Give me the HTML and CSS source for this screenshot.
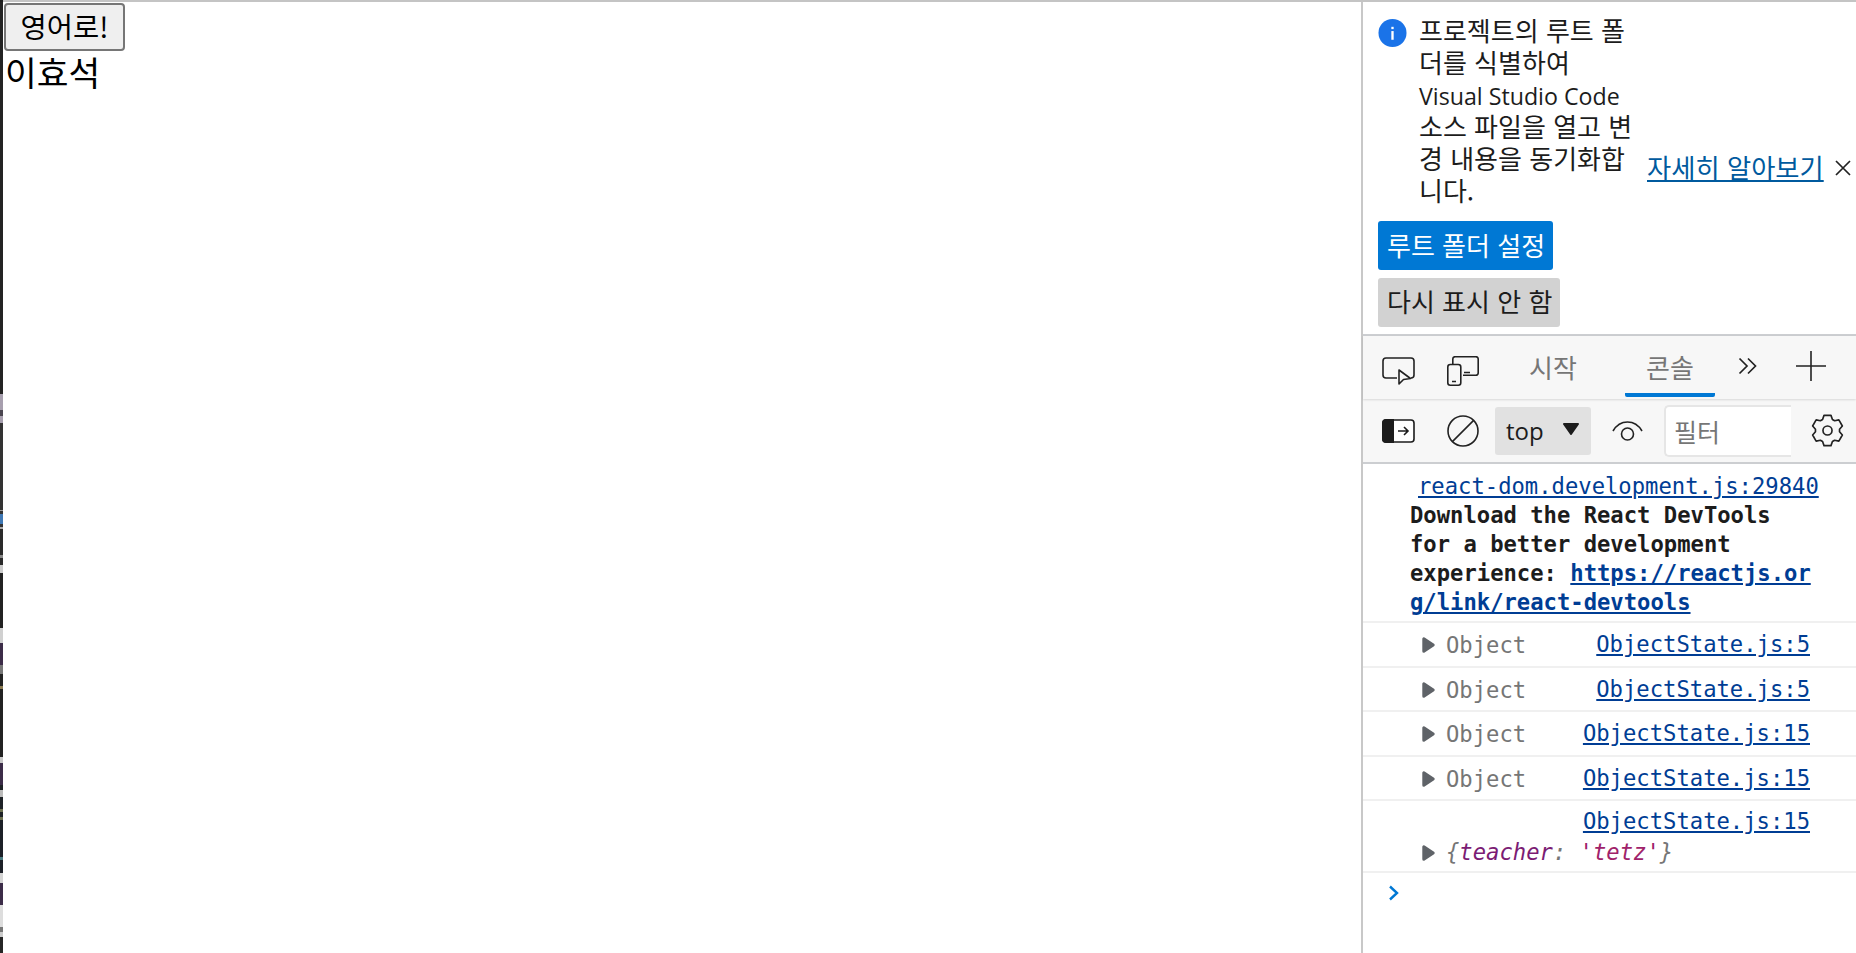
FILE: index.html
```html
<!DOCTYPE html>
<html lang="ko">
<head>
<meta charset="utf-8">
<title>이효석</title>
<link rel="stylesheet" href="styles.css">
</head>
<body>
<div class="topline"></div>
<div class="frame">
  <div class="strip"></div>
  <main class="page">
    <button class="eng">영어로!</button>
    <div class="name">이효석</div>
  </main>
  <aside class="devtools">
    <section class="infobar">
      <div class="infomsg">
        <svg class="infoicon" viewBox="0 0 30 30"><circle cx="15" cy="15" r="14.5" fill="#1a73e8"/><rect x="13.8" y="13" width="2.4" height="9" fill="#fff"/><rect x="13.8" y="8.6" width="2.4" height="2.4" fill="#fff"/></svg>
        <p class="infotext">프로젝트의 루트 폴<br>더를 식별하여<br><span class="latin">Visual Studio Code</span><br>소스 파일을 열고 변<br>경 내용을 동기화합<br>니다.</p>
        <a class="learn">자세히 알아보기</a>
        <svg class="infoclose" viewBox="0 0 16 16"><path d="M1 1L15 15M15 1L1 15" stroke="#222" stroke-width="1.7" fill="none"/></svg>
      </div>
      <div class="primary">루트 폴더 설정</div>
      <div class="secondary">다시 표시 안 함</div>
    </section>
    <nav class="tabs">
      <svg class="ico ico-a" viewBox="0 0 33 28"><path d="M15 21H4a3 3 0 0 1-3-3V4a3 3 0 0 1 3-3h25a3 3 0 0 1 3 3v14a3 3 0 0 1-3 3" fill="none" stroke="#222" stroke-width="1.6"/><path d="M17 13v14l4.500-4.500 7-1z" fill="#f7f7f7" stroke="#222" stroke-width="1.6" stroke-linejoin="round"/></svg>
      <svg class="ico ico-b" viewBox="0 0 32 30"><path d="M5.800 8V3a2.300 2.300 0 0 1 2.300-2.300h20.800a2.300 2.300 0 0 1 2.300 2.300v14a2.300 2.300 0 0 1-2.300 2.300H16" fill="none" stroke="#222" stroke-width="1.6"/><rect x="0.800" y="8.500" width="13" height="20.700" rx="2.500" fill="#f7f7f7" stroke="#222" stroke-width="1.6"/><path d="M5 25.500h4M17 16.500h6" stroke="#222" stroke-width="1.6"/></svg>
      <span class="tab tab-start">시작</span>
      <span class="tab tab-console">콘솔</span>
      <svg class="ico ico-more" viewBox="0 0 20 18"><path d="M1.500 1.500l7.500 7.500-7.500 7.500M10 1.500l7.500 7.500-7.500 7.500" fill="none" stroke="#222" stroke-width="1.700"/></svg>
      <svg class="ico ico-plus" viewBox="0 0 30 30"><path d="M15 0v30M0 15h30" stroke="#222" stroke-width="1.6"/></svg>
    </nav>
    <div class="toolbar">
      <svg class="ico ico-side" viewBox="0 0 33 24"><rect x="1" y="1" width="31" height="22" rx="3" fill="#fff" stroke="#1c1c1c" stroke-width="1.6"/><path d="M4 0h8v24H4a4 4 0 0 1-4-4V4a4 4 0 0 1 4-4z" fill="#1c1c1c"/><path d="M16 12h10M22 8l4 4-4 4" fill="none" stroke="#1c1c1c" stroke-width="1.6"/></svg>
      <svg class="ico ico-clear" viewBox="0 0 32 32"><circle cx="16" cy="16" r="15" fill="none" stroke="#222" stroke-width="1.6"/><path d="M5.400 26.600L26.600 5.400" stroke="#222" stroke-width="1.6"/></svg>
      <div class="context"><span>top</span><svg class="caret" viewBox="0 0 18 12"><path d="M2 1h14L9 11z" fill="#1c1c1c" stroke="#1c1c1c" stroke-width="2" stroke-linejoin="round"/></svg></div>
      <svg class="ico ico-eye" viewBox="0 0 31 20"><path d="M1 10C4.500 4 9.500 1 15.500 1s11 3 14.500 9" fill="none" stroke="#222" stroke-width="1.6"/><circle cx="15.500" cy="13" r="6" fill="none" stroke="#222" stroke-width="1.6"/></svg>
      <div class="filter">필터</div>
      <svg class="ico ico-gear" viewBox="0 0 24 24"><path d="M9.460 .99L14.540 .99 15.580 3.960 17.170 4.880 20.260 4.290 22.810 8.700 20.750 11.080 20.750 12.920 22.810 15.300 20.260 19.710 17.170 19.120 15.580 20.040 14.540 23.010 9.460 23.010 8.420 20.040 6.830 19.120 3.740 19.710 1.190 15.300 3.250 12.920 3.250 11.080 1.190 8.700 3.740 4.290 6.830 4.880 8.420 3.960z" fill="none" stroke="#222" stroke-width="1.200" stroke-linejoin="round"/><circle cx="12" cy="12" r="3.300" fill="none" stroke="#222" stroke-width="1.200"/></svg>
    </div>
    <div class="console">
      <div class="msg msg-react">
        <div class="src src-react"><a>react-dom.development.js:29840</a></div>
        <div class="react-text">Download the React DevTools for a better development experience: <a class="url">https://reactjs.org/link/react-devtools</a></div>
      </div>
      <div class="msg msg-obj">
        <svg class="tri" viewBox="0 0 13 16"><path d="M1.800 1.800v12.400l9.400-6.200z" fill="#5f6368" stroke="#5f6368" stroke-width="3" stroke-linejoin="round"/></svg>
        <span class="obj">Object</span><a class="src-link">ObjectState.js:5</a>
      </div>
      <div class="msg msg-obj">
        <svg class="tri" viewBox="0 0 13 16"><path d="M1.800 1.800v12.400l9.400-6.200z" fill="#5f6368" stroke="#5f6368" stroke-width="3" stroke-linejoin="round"/></svg>
        <span class="obj">Object</span><a class="src-link">ObjectState.js:5</a>
      </div>
      <div class="msg msg-obj">
        <svg class="tri" viewBox="0 0 13 16"><path d="M1.800 1.800v12.400l9.400-6.200z" fill="#5f6368" stroke="#5f6368" stroke-width="3" stroke-linejoin="round"/></svg>
        <span class="obj">Object</span><a class="src-link">ObjectState.js:15</a>
      </div>
      <div class="msg msg-obj">
        <svg class="tri" viewBox="0 0 13 16"><path d="M1.800 1.800v12.400l9.400-6.200z" fill="#5f6368" stroke="#5f6368" stroke-width="3" stroke-linejoin="round"/></svg>
        <span class="obj">Object</span><a class="src-link">ObjectState.js:15</a>
      </div>
      <div class="msg msg-last">
        <div class="src src-last"><a>ObjectState.js:15</a></div>
        <div class="last-line">
          <svg class="tri" viewBox="0 0 13 16"><path d="M1.800 1.800v12.400l9.400-6.200z" fill="#5f6368" stroke="#5f6368" stroke-width="3" stroke-linejoin="round"/></svg>
          <span class="literal">{<span class="key">teacher</span><span class="colon">:</span> <span class="val">'tetz'</span>}</span>
        </div>
      </div>
      <svg class="prompt" viewBox="0 0 12 16"><path d="M2 1.500L9 8l-7 6.500" fill="none" stroke="#0078d4" stroke-width="2.400"/></svg>
    </div>
  </aside>
</div>
</body>
</html>
```
FILE: styles.css
```css
* { box-sizing: border-box; }
html, body { margin: 0; height: 100%; background: #fff; overflow: hidden; }
body { display: flex; flex-direction: column; font-family: "Noto Sans CJK KR", "Noto Sans", sans-serif; }
.topline { height: 2px; background: #c4c4c4; flex: none; border-left: 3px solid #1f1f1f; }
.frame { flex: 1; display: flex; min-height: 0; }
.strip {
  width: 3px; flex: none;
  background: linear-gradient(to bottom,
    #232323 0 392px, #a79fae 392px 408px, #4a4650 408px 414px, #a79fae 414px 421px,
    #333 421px 508px, #9a9a9a 508px 509px, #333 509px 512px, #3f78b4 512px 522px,
    #333 522px 525px, #aaa 525px 527px, #2a2a2a 527px 553px, #888 553px 556px,
    #2a2a2a 556px 563px, #ccc 563px 571px, #222 571px 626px, #d0d0d0 626px 641px,
    #3c2c48 641px 663px, #777 663px 672px, #222 672px 684px, #8a7a50 684px 687px,
    #222 687px 755px, #c8c8c8 755px 761px, #3c2c48 761px 783px, #1e2226 783px 788px,
    #bbb 788px 795px, #1e2226 795px 807px, #6c7050 807px 810px, #1e2226 810px 815px,
    #6c7050 815px 818px, #1c2028 818px 855px, #4a7a80 855px 858px, #1c2028 858px 871px,
    #d4d4d4 871px 881px, #3c2c48 881px 903px, #ddd 903px 925px, #777 925px 930px, #ccc 930px 935px,
    #262626 935px);
}
.page { flex: 1; padding-left: 1px; padding-top: 1px; }
.eng { display: block; width: 121px; height: 48px; padding: 0 0 3px; background: #efefef; border: 2px solid #767676; border-radius: 4px; font: 28.500px "Noto Sans CJK KR", sans-serif; color: #000; }
.name { font-size: 34.500px; line-height: 45px; margin-top: -2px; margin-left: 1px; color: #000; }
.devtools { width: 495px; flex: none; border-left: 2px solid #c8c8c8; display: flex; flex-direction: column; font-family: "Noto Sans CJK KR", sans-serif; }
.infobar { height: 334px; flex: none; padding: 14px 0 0 15px; border-bottom: 2px solid #ccced1; }
.infomsg { display: flex; align-items: flex-end; height: 186px; }
.infoicon { width: 29px; height: 30px; align-self: flex-start; margin-top: 2px; flex: none; }
.infotext { width: 216px; margin: -2px 0 0 12px; font-size: 26px; line-height: 32px; color: #1c1c1c; align-self: flex-start; flex: none; }
.latin { font-family: "Open Sans", sans-serif; font-size: 23.200px; line-height: 1; }
.learn { margin: 0 0 17px 12px; font-size: 26.300px; line-height: 36px; color: #005a9e; text-decoration: underline; white-space: nowrap; flex: none; }
.infoclose { width: 16px; height: 16px; margin: 0 0 26px 11px; flex: none; }
.primary, .secondary { display: flex; align-items: center; height: 49px; padding: 0 9px; border-radius: 3px; font-size: 26px; white-space: nowrap; }
.primary { width: 175px; margin-top: 19px; padding-bottom: 2px; background: #0078d4; color: #fff; }
.secondary { width: 182px; margin-top: 8px; padding-bottom: 4px; background: #d2d2d2; color: #1c1c1c; }
.tabs { height: 63px; flex: none; display: flex; align-items: center; background: #f7f7f7; box-shadow: 0 1px 2px rgba(0,0,0,.12); position: relative; z-index: 1; }
.ico { flex: none; display: block; }
.ico-a { width: 33px; height: 28px; margin-left: 19px; margin-top: 7px; }
.ico-b { width: 32px; height: 30px; margin-left: 32px; margin-top: 7px; }
.tab { flex: none; color: #767676; font-size: 26px; height: 61px; align-self: flex-start; display: flex; align-items: center; justify-content: center; padding-top: 3px; border-bottom: 4px solid transparent; border-radius: 0 0 2px 2px; font-family: "Noto Sans CJK KR", sans-serif; }
.tab-start { width: 90px; margin-left: 29px; }
.tab-console { width: 90px; margin-left: 27px; border-bottom-color: #0078d4; }
.ico-more { width: 20px; height: 18px; margin: -3px 0 0 23px; }
.ico-plus { width: 30px; height: 30px; margin: -3px 0 0 38px; }
.toolbar { height: 65px; flex: none; display: flex; align-items: center; background: #f7f7f7; border-bottom: 2px solid #ccced1; }
.ico-side { width: 33px; height: 24px; margin-left: 19px; }
.ico-clear { width: 32px; height: 32px; margin-left: 32px; }
.context { width: 96px; height: 48px; margin-left: 16px; background: #e1e1e1; border-radius: 3px; display: flex; align-items: center; padding-left: 11px; font-size: 24px; color: #1c1c1c; font-family: "Open Sans", sans-serif; }
.caret { width: 18px; height: 12px; margin-left: 18px; margin-top: -4px; }
.ico-eye { width: 31px; height: 20px; margin-left: 21px; }
.filter { width: 127px; height: 52px; margin-left: 21px; background: #fff; border: 2px solid #e6e6e6; border-right: 0; border-radius: 5px 0 0 5px; display: flex; align-items: center; padding-left: 8px; font-size: 25px; color: #767676; font-family: "Noto Sans CJK KR", sans-serif; }
.ico-gear { width: 33px; height: 33px; margin-left: 20px; }
.console { flex: 1; font-family: "DejaVu Sans Mono", monospace; font-size: 22.200px; position: relative; background: #fff; }
.console a { color: #003d94; text-decoration: underline; }
.msg { border-bottom: 2px solid #f0f0f0; }
.msg-react { height: 159px; padding-top: 8px; }
.src, .src-link { white-space: nowrap; }
.src-react { padding-left: 55px; line-height: 29px; }
.react-text { width: 402px; margin-left: 47px; line-height: 29px; font-weight: 700; color: #1c1c1c; }
.url { word-break: break-all; }
.msg-obj { height: 44.500px; display: flex; align-items: center; padding-left: 59px; }
.tri { width: 13px; height: 16px; flex: none; margin-right: 11px; margin-top: 2px; }
.obj { color: #767676; margin-top: 2px; }
.src-link { margin-left: auto; margin-right: 46px; }
.msg-last { height: 72px; padding-top: 5px; }
.src-last { text-align: right; padding-right: 46px; line-height: 30px; }
.last-line { display: flex; align-items: center; padding-left: 59px; height: 31px; }
.literal { color: #767676; font-style: italic; }
.key { color: #7b1c74; }
.colon { color: #767676; }
.val { color: #a0226a; }
.prompt { position: absolute; left: 25px; top: 421px; width: 12px; height: 16px; }
```
